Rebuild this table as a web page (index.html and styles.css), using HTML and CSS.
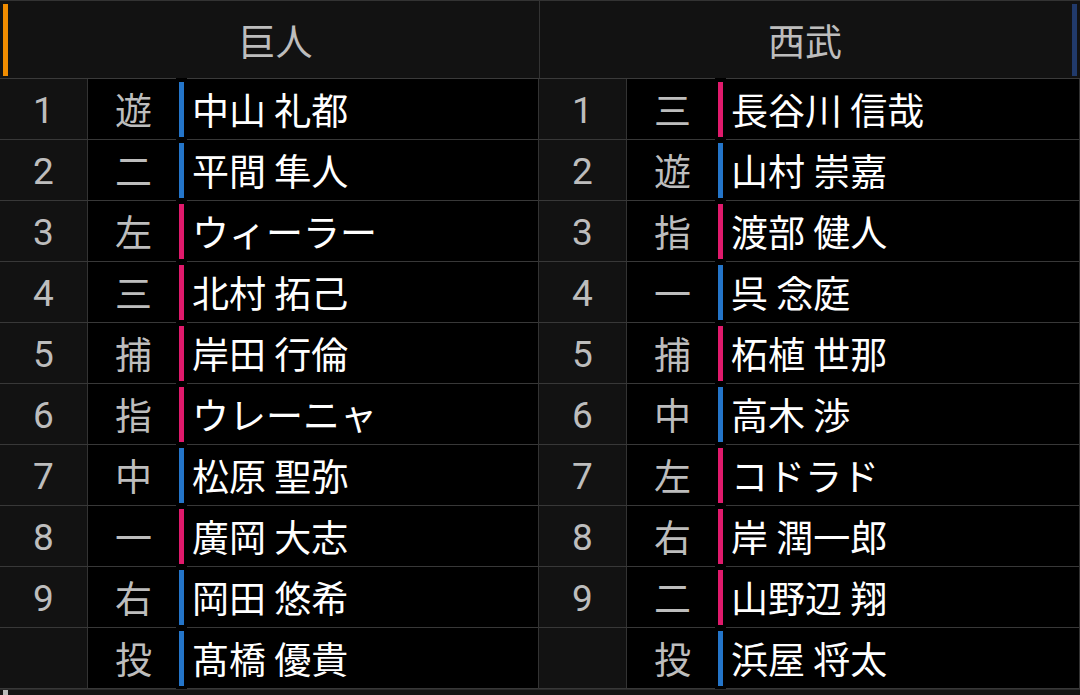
FILE: index.html
```html
<!DOCTYPE html>
<html lang="ja">
<head>
<meta charset="utf-8">
<title>スタメン</title>
<link rel="stylesheet" href="styles.css">
</head>
<body>
<div class="board">
  <div class="head">
    <div class="team team-home"><span class="tbar tbar-orange"></span>巨人</div>
    <div class="team team-away">西武<span class="tbar tbar-navy"></span></div>
  </div>
  <div class="tables">
    <div class="side side-left">
      <div class="row"><div class="num">1</div><div class="pos">遊</div><div class="name blue">中山 礼都</div></div>
      <div class="row"><div class="num">2</div><div class="pos">二</div><div class="name blue">平間 隼人</div></div>
      <div class="row"><div class="num">3</div><div class="pos">左</div><div class="name pink">ウィーラー</div></div>
      <div class="row"><div class="num">4</div><div class="pos">三</div><div class="name pink">北村 拓己</div></div>
      <div class="row"><div class="num">5</div><div class="pos">捕</div><div class="name pink">岸田 行倫</div></div>
      <div class="row"><div class="num">6</div><div class="pos">指</div><div class="name pink">ウレーニャ</div></div>
      <div class="row"><div class="num">7</div><div class="pos">中</div><div class="name blue">松原 聖弥</div></div>
      <div class="row"><div class="num">8</div><div class="pos">一</div><div class="name pink">廣岡 大志</div></div>
      <div class="row"><div class="num">9</div><div class="pos">右</div><div class="name blue">岡田 悠希</div></div>
      <div class="row"><div class="num"></div><div class="pos">投</div><div class="name blue">髙橋 優貴</div></div>
    </div>
    <div class="side side-right">
      <div class="row"><div class="num">1</div><div class="pos">三</div><div class="name pink">長谷川 信哉</div></div>
      <div class="row"><div class="num">2</div><div class="pos">遊</div><div class="name blue">山村 崇嘉</div></div>
      <div class="row"><div class="num">3</div><div class="pos">指</div><div class="name pink">渡部 健人</div></div>
      <div class="row"><div class="num">4</div><div class="pos">一</div><div class="name blue">呉 念庭</div></div>
      <div class="row"><div class="num">5</div><div class="pos">捕</div><div class="name pink">柘植 世那</div></div>
      <div class="row"><div class="num">6</div><div class="pos">中</div><div class="name blue">高木 渉</div></div>
      <div class="row"><div class="num">7</div><div class="pos">左</div><div class="name pink">コドラド</div></div>
      <div class="row"><div class="num">8</div><div class="pos">右</div><div class="name pink">岸 潤一郎</div></div>
      <div class="row"><div class="num">9</div><div class="pos">二</div><div class="name pink">山野辺 翔</div></div>
      <div class="row"><div class="num"></div><div class="pos">投</div><div class="name blue">浜屋 将太</div></div>
    </div>
  </div>
  <div class="foot"><span class="fbar"></span></div>
</div>
</body>
</html>
```

FILE: styles.css
```css
html, body {
  margin: 0;
  padding: 0;
  background: #121212;
}
body {
  width: 1080px;
  height: 695px;
  overflow: hidden;
  font-family: "Noto Sans CJK JP", "Noto Sans", sans-serif;
}
.board {
  width: 1080px;
  border-top: 1px solid #333;
}
.head {
  display: flex;
  height: 77px;
  background: #121212;
  border-bottom: 1px solid #3a3a3a;
}
.team {
  display: flex;
  align-items: center;
  justify-content: center;
  color: #bdbdbd;
  font-size: 37px;
  position: relative;
}
.team-home {
  width: 527px;
  padding-left: 12px;
  border-right: 1px solid #333;
}
.team-away {
  flex: 1;
  padding-right: 10px;
}
.tbar {
  position: absolute;
  top: 3px;
  bottom: 2px;
  width: 5px;
}
.tbar-orange {
  left: 3px;
  background: #f08c00;
}
.tbar-navy {
  right: 3px;
  background: #213a6b;
}
.tables {
  display: flex;
  background: #000;
}
.side-left {
  width: 538px;
  border-right: 1px solid #333;
}
.side-right {
  width: 540px;
  border-right: 1px solid #333;
}
.row {
  display: flex;
  height: 60px;
  border-bottom: 1px solid #383838;
}
.num {
  width: 87px;
  flex-shrink: 0;
  padding-top: 3px;
  border-right: 1px solid #333;
  background: #121212;
  color: #bdbdbd;
  font-family: Roboto, "Noto Sans", sans-serif;
  font-size: 37px;
  display: flex;
  align-items: center;
  justify-content: center;
}
.pos {
  width: 91px;
  flex-shrink: 0;
  color: #bdbdbd;
  font-size: 37px;
  display: flex;
  align-items: center;
  justify-content: center;
}
.name {
  flex: 1;
  position: relative;
  display: flex;
  align-items: center;
  padding-left: 13px;
  color: #fff;
  font-size: 37px;
  white-space: nowrap;
}
.name::before {
  content: "";
  position: absolute;
  left: -3px;
  top: -1px;
  bottom: -1px;
  width: 11px;
  background: #000;
}
.name::after {
  content: "";
  position: absolute;
  left: 0;
  top: 3px;
  bottom: 2px;
  width: 5px;
}
.blue::after {
  background: #2475c9;
}
.pink::after {
  background: #e01a6c;
}
.foot {
  height: 10px;
  background: #141414;
  border-top: 1px solid #2a2a2a;
  padding-left: 3px;
}
.fbar {
  display: block;
  width: 5px;
  height: 8px;
  background: #bbb;
}
```
